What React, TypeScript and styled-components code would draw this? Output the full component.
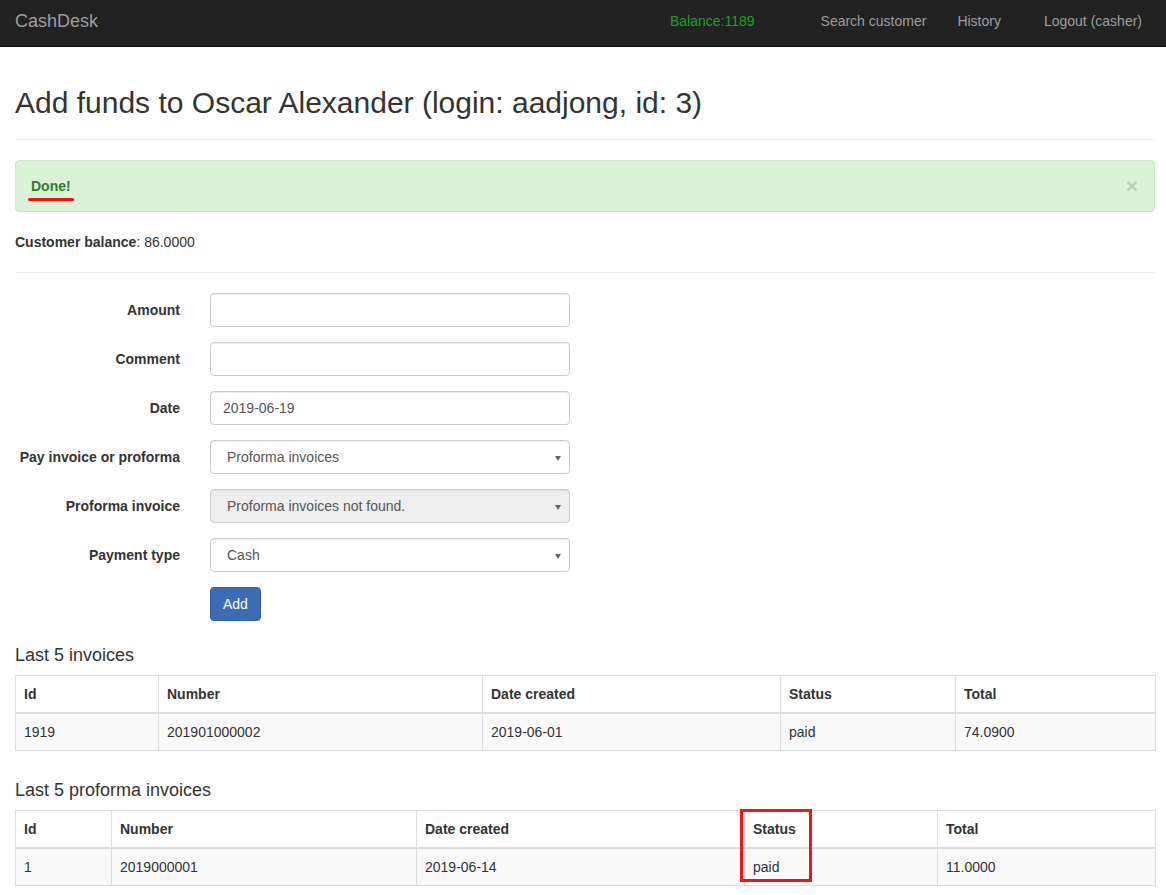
import React from "react";
import styled, { createGlobalStyle } from "styled-components";

const GlobalStyle = createGlobalStyle`
  * { box-sizing: border-box; }
  html, body { margin: 0; padding: 0; background: #fff; }
  body {
    font-family: "Liberation Sans", Arial, sans-serif;
    font-size: 14px;
    line-height: 20px;
    color: #333;
  }
`;

const Navbar = styled.nav`
  height: 47px;
  background: #222;
  border-bottom: 1px solid #080808;
  display: flex;
  align-items: center;
  padding: 0 24px 0 15px;
`;

const Brand = styled.a`
  color: #9d9d9d;
  font-size: 18px;
  line-height: 20px;
  margin-right: auto;
  margin-top: -4px;
`;

const NavLink = styled.a<{ $green?: boolean; $gap: number }>`
  color: ${(p) => (p.$green ? "#1aa31a" : "#9d9d9d")};
  font-size: 14px;
  line-height: 20px;
  margin-left: ${(p) => p.$gap}px;
  margin-top: -4px;
`;

const Container = styled.main`
  padding: 0 11px 0 15px;
`;

const PageHeader = styled.div`
  margin-top: 38px;
  padding-bottom: 18px;
  border-bottom: 1px solid #eee;
`;

const Title = styled.h1`
  margin: 0;
  font-size: 30px;
  font-weight: 400;
  line-height: 36px;
  color: #333;
`;

const Alert = styled.div`
  margin-top: 20px;
  margin-bottom: 20px;
  padding: 15px;
  border: 1px solid #c9ebc3;
  border-radius: 4px;
  background: #daf2d6;
  color: #3c763d;
  display: flex;
  justify-content: space-between;
  align-items: center;
`;

const AlertStrong = styled.strong`
  position: relative;
  font-weight: 700;
  color: #2f7a34;
`;

const Underline = styled.span`
  position: absolute;
  left: -3px;
  right: -3px;
  bottom: -5px;
  height: 3px;
  border-radius: 2px;
  background: #f01010;
`;

const Close = styled.span`
  font-size: 21px;
  font-weight: 700;
  line-height: 1;
  color: #000;
  opacity: 0.15;
  margin-top: -2px;
  margin-right: 1px;
`;

const Balance = styled.p`
  margin: 0;
`;

const Rule = styled.hr`
  margin: 20px 0;
  border: 0;
  border-top: 1px solid #eee;
`;

const Form = styled.form`
  display: grid;
  grid-template-columns: 165px 360px;
  column-gap: 30px;
  row-gap: 15px;
  align-items: center;
`;

const Label = styled.label`
  text-align: right;
  font-weight: 700;
`;

const Input = styled.input`
  height: 34px;
  width: 100%;
  padding: 6px 12px;
  font-family: inherit;
  font-size: 14px;
  color: #555;
  background: #fff;
  border: 1px solid #ccc;
  border-radius: 4px;
  box-shadow: inset 0 1px 1px rgba(0, 0, 0, 0.075);
`;

const SelectWrap = styled.div<{ $disabled?: boolean }>`
  position: relative;
  height: 34px;
  border: 1px solid #ccc;
  border-radius: 4px;
  background: ${(p) => (p.$disabled ? "#eee" : "#fff")};
  box-shadow: inset 0 1px 1px rgba(0, 0, 0, 0.075);
  display: flex;
  align-items: center;
  padding: 0 16px;
  color: #555;
  &::after {
    content: "";
    position: absolute;
    right: 8px;
    top: 15px;
    border-left: 3px solid transparent;
    border-right: 3px solid transparent;
    border-top: 5px solid #666;
  }
`;

const Button = styled.button`
  grid-column: 2;
  justify-self: start;
  height: 34px;
  padding: 6px 12px;
  font-family: inherit;
  font-size: 14px;
  line-height: 20px;
  color: #fff;
  background: #3e6cb4;
  border: 1px solid #2e5fa4;
  border-radius: 4px;
`;

const SectionTitle = styled.h4<{ $top: number }>`
  margin: ${(p) => p.$top}px 0 10px;
  font-size: 18px;
  font-weight: 400;
  line-height: 20px;
`;

const TableWrap = styled.div`
  position: relative;
`;

const Table = styled.table`
  width: 100%;
  table-layout: fixed;
  border-collapse: collapse;
  margin-bottom: 20px;
  border: 1px solid #ddd;
`;

const Th = styled.th`
  text-align: left;
  padding: 8px;
  line-height: 20px;
  font-weight: 700;
  border: 1px solid #ddd;
  border-bottom: 2px solid #ddd;
`;

const Td = styled.td`
  padding: 8px;
  line-height: 20px;
  border: 1px solid #ddd;
  background: #f9f9f9;
`;

const Highlight = styled.div`
  position: absolute;
  left: 725px;
  top: -1px;
  width: 72px;
  height: 73px;
  border: 3px solid #f01515;
`;

type TableProps = { widths: number[]; head: string[]; row: string[]; highlight?: boolean };

function DataTable({ widths, head, row, highlight }: TableProps) {
  return (
    <TableWrap>
      <Table>
        <colgroup>
          {widths.map((w, i) => (
            <col key={i} width={w} />
          ))}
        </colgroup>
        <thead>
          <tr>
            {head.map((h) => (
              <Th key={h}>{h}</Th>
            ))}
          </tr>
        </thead>
        <tbody>
          <tr>
            {row.map((c, i) => (
              <Td key={i}>{c}</Td>
            ))}
          </tr>
        </tbody>
      </Table>
      {highlight && <Highlight />}
    </TableWrap>
  );
}

const head = ["Id", "Number", "Date created", "Status", "Total"];

export default function App() {
  return (
    <>
      <GlobalStyle />
      <Navbar>
        <Brand>CashDesk</Brand>
        <NavLink $green $gap={0}>Balance:1189</NavLink>
        <NavLink $gap={66}>Search customer</NavLink>
        <NavLink $gap={31}>History</NavLink>
        <NavLink $gap={43}>Logout (casher)</NavLink>
      </Navbar>
      <Container>
        <PageHeader>
          <Title>Add funds to Oscar Alexander (login: aadjong, id: 3)</Title>
        </PageHeader>
        <Alert>
          <AlertStrong>
            Done!
            <Underline />
          </AlertStrong>
          <Close>×</Close>
        </Alert>
        <Balance>
          <strong>Customer balance</strong>: 86.0000
        </Balance>
        <Rule />
        <Form>
          <Label>Amount</Label>
          <Input />
          <Label>Comment</Label>
          <Input />
          <Label>Date</Label>
          <Input defaultValue="2019-06-19" />
          <Label>Pay invoice or proforma</Label>
          <SelectWrap>Proforma invoices</SelectWrap>
          <Label>Proforma invoice</Label>
          <SelectWrap $disabled>Proforma invoices not found.</SelectWrap>
          <Label>Payment type</Label>
          <SelectWrap>Cash</SelectWrap>
          <Button type="button">Add</Button>
        </Form>
        <SectionTitle $top={24}>Last 5 invoices</SectionTitle>
        <DataTable
          widths={[143, 324, 298, 175, 200]}
          head={head}
          row={["1919", "201901000002", "2019-06-01", "paid", "74.0900"]}
        />
        <SectionTitle $top={29}>Last 5 proforma invoices</SectionTitle>
        <DataTable
          widths={[96, 305, 328, 193, 218]}
          head={head}
          row={["1", "2019000001", "2019-06-14", "paid", "11.0000"]}
          highlight
        />
      </Container>
    </>
  );
}
